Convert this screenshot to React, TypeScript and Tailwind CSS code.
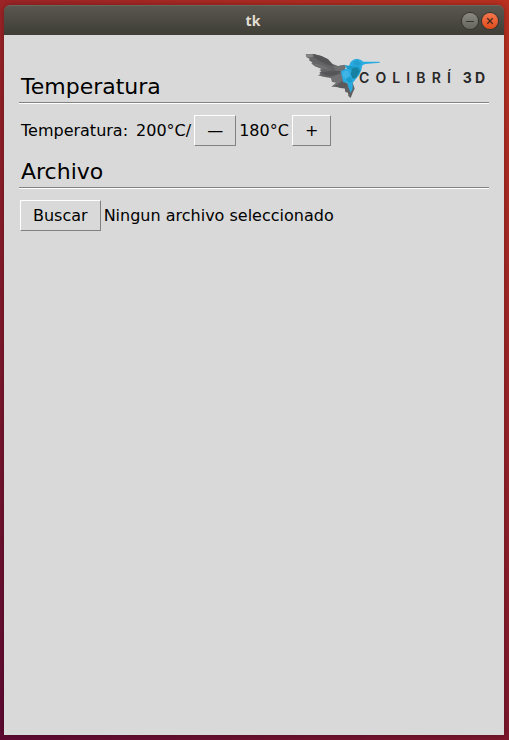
import React from "react";

function Hummingbird() {
  return (
    <svg viewBox="15 15 228 135" className="h-[45px] w-[76px] shrink-0" aria-hidden="true">
      <path fill="#646466" d="M17 19 L40 18 L64 24 L84 34 L98 48 L114 54 L132 52 L140 78 L126 92 L106 92 L92 90 L70 86 L54 82 L62 78 L58 74 L64 70 L58 66 L66 63 L44 54 L34 46 L38 44 L26 36 L30 33 L20 28Z" />
      <path fill="#858587" d="M17 19 L34 18 L42 24 L34 28 L20 28Z" />
      <path fill="#545456" d="M40 18 L64 24 L84 34 L100 54 L82 50 L60 40 L42 28Z" />
      <path fill="#707072" d="M34 46 L56 48 L78 56 L94 66 L66 63 L44 54Z" />
      <path fill="#707072" d="M100 54 L116 54 L134 50 L138 58 L126 70 L108 68Z" />
      <path fill="#565658" d="M62 74 L92 68 L124 70 L110 82 L84 84Z" />
      <path fill="#717173" d="M92 88 L110 80 L128 78 L136 104 L138 118 L118 118 L94 116 L108 104 L96 102Z" />
      <path fill="#5a5a5c" d="M104 114 L128 98 L142 106 L140 122 L120 120Z" />
      <path fill="#606062" d="M134 120 L144 104 L158 104 L164 122 L159 132 L152 150 L145 144 L144 134 L136 132Z" />
      <path fill="#29abe2" d="M132 50 L146 56 L152 42 L160 35 L170 32 L182 35 L190 41 L238 41 L240 44 L196 48 L187 52 L184 66 L178 80 L168 92 L158 105 L158 122 L152 134 L146 120 L142 104 L130 103 L124 78 L122 70 L130 66 L142 60Z" />
      <path fill="#1a9ccb" d="M134 52 L154 54 L178 56 L182 68 L160 68 L142 62Z" />
      <path fill="#15809f" d="M156 62 L170 58 L180 70 L168 90 L158 92 L152 78Z" />
      <path fill="#3fb4e5" d="M128 72 L142 66 L150 80 L138 92 L128 86Z" />
      <path fill="#1d9dcc" d="M138 92 L152 86 L158 102 L144 104Z" />
      <path fill="#239fcf" d="M160 42 L172 36 L184 48 L174 54 L160 50Z" />
    </svg>
  );
}

function Logo() {
  return (
    <div className="flex h-[45px] w-[180px] shrink-0" role="img" aria-label="Colibrí 3D">
      <Hummingbird />
      <div className="-ml-[22px] flex flex-1 items-center gap-3 pt-[5px] font-['Inter',sans-serif] text-sm leading-5 font-semibold text-[#282828]">
        <span className="flex flex-1 justify-between">
          {["C", "O", "L", "I", "B", "R", "Í"].map((letter) => (
            <span key={letter}>{letter}</span>
          ))}
        </span>
        <span className="flex gap-[3px] font-bold">
          <span>3</span>
          <span>D</span>
        </span>
      </div>
    </div>
  );
}

function TitleBar() {
  return (
    <header className="grid h-[30px] grid-cols-[1fr_auto_1fr] items-center rounded-t-[6px] border-t border-[#6a675f] bg-linear-to-b from-[#5a574f] to-[#3e3d36] pr-[6px]">
      <span />
      <h1 className="pl-1 font-['Noto_Sans',sans-serif] text-sm leading-5 font-bold text-[#e2ded2]">tk</h1>
      <div className="flex justify-end gap-1">
        <button aria-label="Minimizar" className="size-4 rounded-full bg-linear-to-b from-[#8b8981] to-[#66655e] ring-1 ring-[#35342f]">
          <svg viewBox="0 0 16 16" className="size-4"><path d="M4 8.5H12" stroke="#35352f" /></svg>
        </button>
        <button aria-label="Cerrar" className="size-4 rounded-full bg-linear-to-b from-[#f4764d] to-[#df4a16] ring-1 ring-[#35342f]">
          <svg viewBox="0 0 16 16" className="size-4"><path d="M5.3 5.3L10.7 10.7M10.7 5.3L5.3 10.7" stroke="#42291b" strokeWidth="1.3" /></svg>
        </button>
      </div>
    </header>
  );
}

function TkButton({ children, label }: { children: React.ReactNode; label?: string }) {
  return (
    <button
      aria-label={label}
      className="h-[31px] border border-t-white border-r-[#828282] border-b-[#828282] border-l-white bg-[#d9d9d9] px-3 leading-5"
    >
      {children}
    </button>
  );
}

function SectionTitle({ children }: { children: React.ReactNode }) {
  return <h2 className="pb-[2px] pl-[2px] text-[22px] leading-[26px]">{children}</h2>;
}

function Separator() {
  return <div className="h-[2px] border-t border-b border-t-[#828282] border-b-white" />;
}

export default function App() {
  return (
    <div className="flex min-h-screen flex-col bg-[linear-gradient(35deg,#5f0a33_0%,#bb3120_100%)] px-1 pt-[5px] pb-[5px] font-['DejaVu_Sans',sans-serif] text-base text-black">
      <div className="mr-px flex flex-1 flex-col rounded-t-[6px] shadow-[0_0_6px_rgba(0,0,0,0.3)]">
        <TitleBar />
        <main className="flex-1 bg-[#d9d9d9] px-[15px] pt-[18px]">
          <section>
            <div className="flex items-end justify-between pr-1">
              <SectionTitle>Temperatura</SectionTitle>
              <div className="pb-1"><Logo /></div>
            </div>
            <Separator />
            <div className="mt-[11px] flex items-center gap-[3px] pl-[2px]">
              <div className="flex gap-2">
                <span>Temperatura:</span>
                <span>200°C/</span>
              </div>
              <TkButton label="Bajar temperatura">—</TkButton>
              <span>180°C</span>
              <TkButton label="Subir temperatura">+</TkButton>
            </div>
          </section>
          <section className="mt-[13px]">
            <SectionTitle>Archivo</SectionTitle>
            <Separator />
            <div className="mt-[11px] flex items-center gap-[3px] pl-px">
              <TkButton>Buscar</TkButton>
              <span>Ningun archivo seleccionado</span>
            </div>
          </section>
        </main>
      </div>
    </div>
  );
}
